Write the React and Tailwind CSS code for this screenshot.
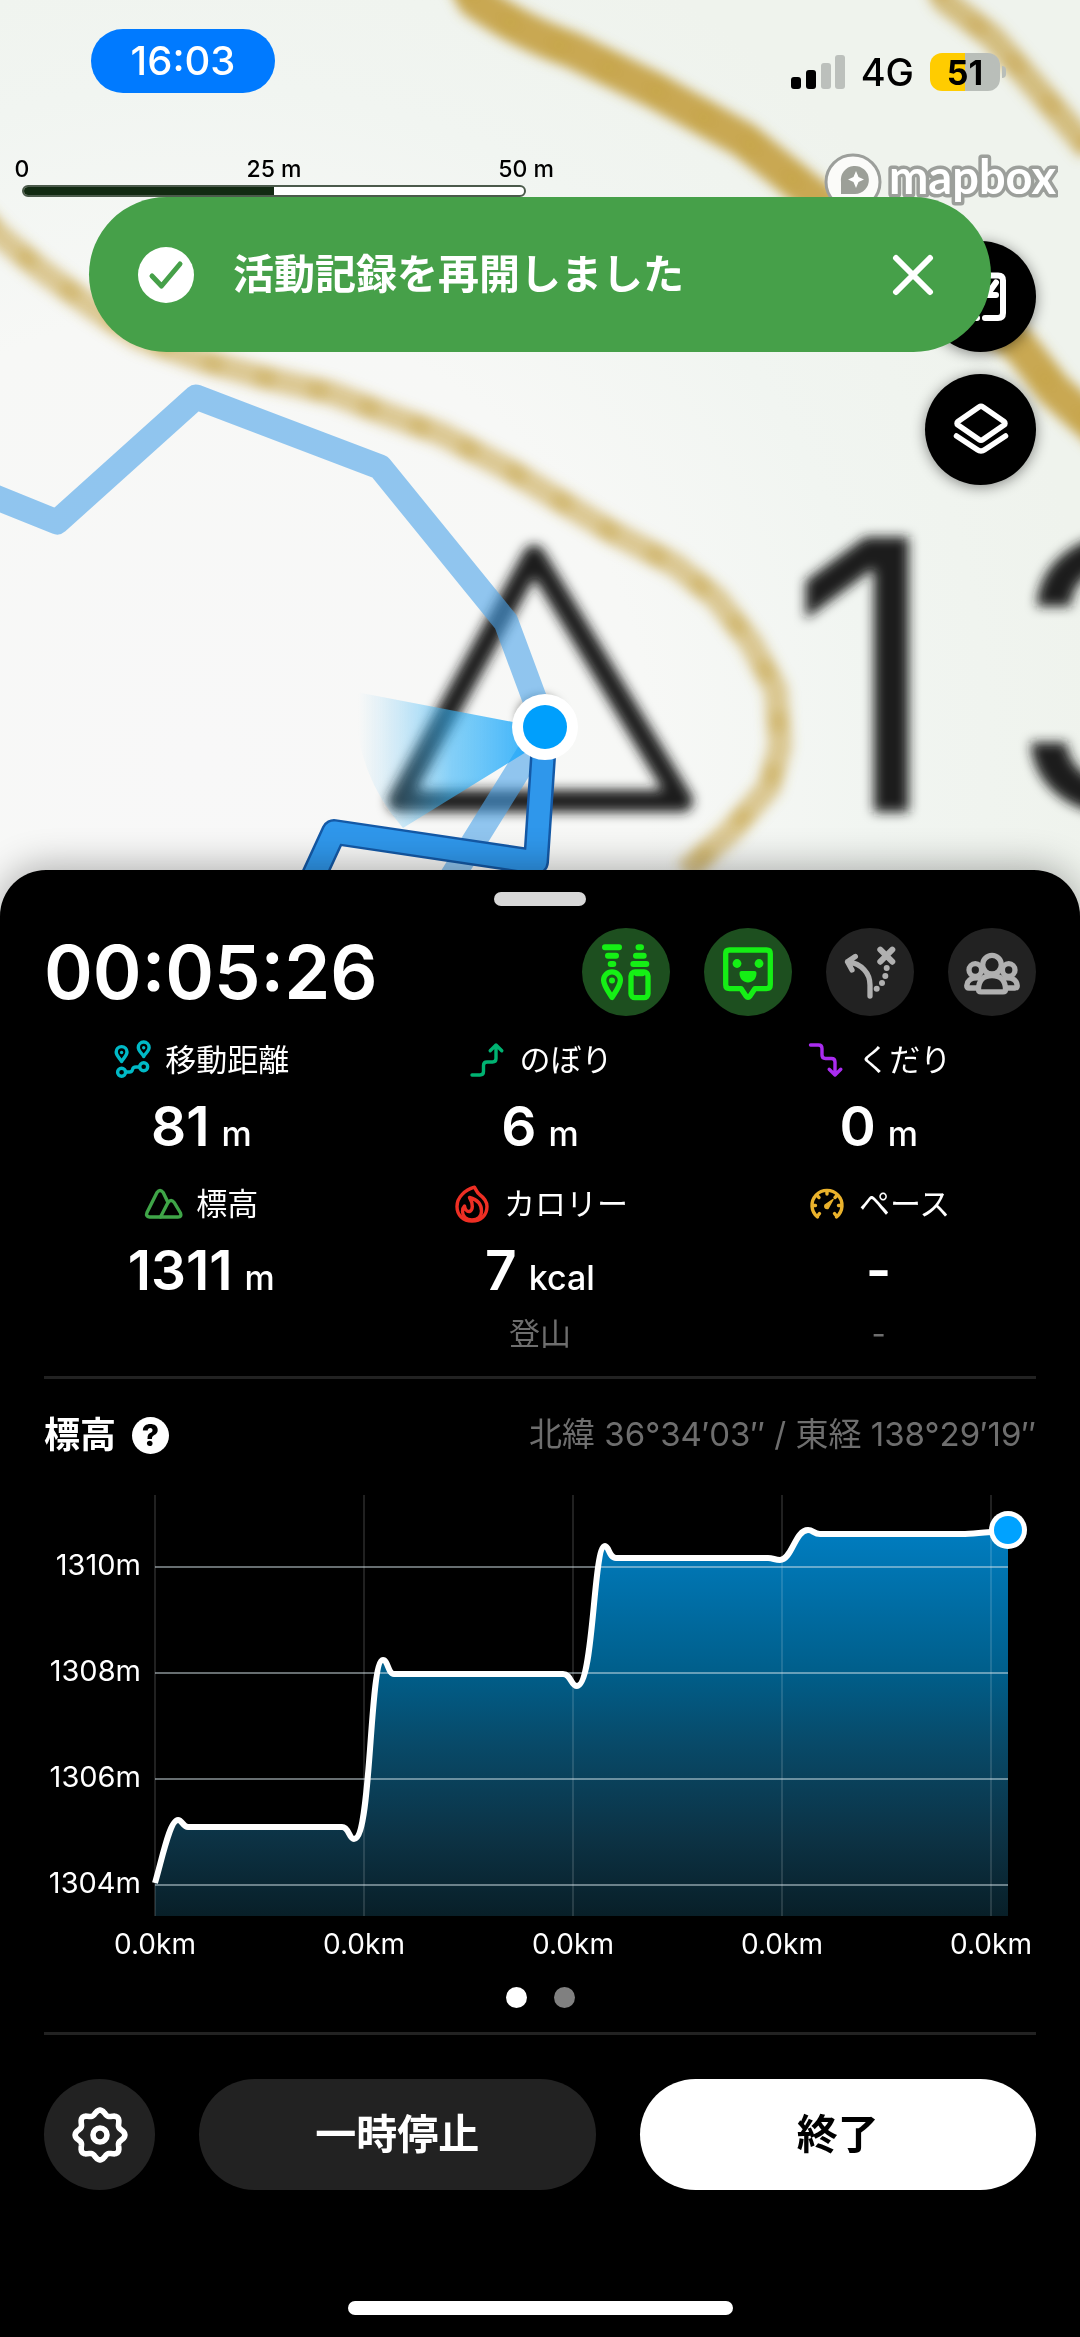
import { useState } from 'react'

const CONTOURS = [
  { d: 'M465 -20 L475 0 Q520 32 572 50 L654 90 L744 140 L806 190 L900 262 L1019 345 L1054 390 L1110 440', w: 36, o: 0.9, bead: 0.25 },
  { d: 'M935 -20 L944 0 L992 37 L1033 84 L1090 150', w: 25, o: 0.65, bead: 0.3 },
  { d: 'M-20 215 L0 236 L41 270 L96 310 L138 337 L200 360 L262 377 L331 393 L386 414 L441 434 L513 472 L544 491 L610 531 L675 565 L716 598 L751 643 L776 690 L780 746 L769 787 L730 832 L685 872', w: 24, o: 0.55, bead: 0.35 }
]

const AREA_LINE =
  'M155 1884 C163 1856 170 1821 178 1821 C182 1821 183 1828 188 1828 H342 C349 1828 349 1840 354 1840 C372 1840 369 1661 383 1661 C388 1661 388 1675 394 1675 H563 C571 1675 571 1687 577 1687 C594 1687 593 1547 605 1547 C609 1547 609 1559 616 1559 H768 C773 1559 775 1561 780 1561 C792 1561 795 1531 808 1531 C813 1531 814 1535 820 1535 H965 C980 1535 990 1532 1008 1532'

const Y_TICKS = [
  { label: '1310m', y: 1568 },
  { label: '1308m', y: 1674 },
  { label: '1306m', y: 1780 },
  { label: '1304m', y: 1886 }
]

const X_TICKS = [155, 364, 573, 782, 991]

const gearPath = Array.from({ length: 96 }, (_, i) => {
  const a = (i / 96) * Math.PI * 2
  const r = 22.6 + 2.3 * Math.cos(8 * a)
  return `${i ? 'L' : 'M'}${(30 + r * Math.cos(a)).toFixed(2)} ${(30 + r * Math.sin(a)).toFixed(2)}`
}).join('') + 'Z'

function StrokeIcon({ box = 40, width = 3.4, className = 'size-10', children }) {
  return (
    <svg
      viewBox={`0 0 ${box} ${box}`}
      className={className}
      fill="none"
      stroke="currentColor"
      strokeWidth={width}
      strokeLinecap="round"
      strokeLinejoin="round"
      aria-hidden="true"
    >
      {children}
    </svg>
  )
}

function MapBackground() {
  return (
    <svg viewBox="0 0 1080 960" className="absolute inset-x-0 top-0 w-full" aria-hidden="true">
      <defs>
        <radialGradient id="ground" gradientUnits="userSpaceOnUse" cx="200" cy="760" r="900">
          <stop offset="0" stopColor="#f8f8f8" />
          <stop offset="0.5" stopColor="#f7f8f6" />
          <stop offset="0.75" stopColor="#f1f5f1" />
          <stop offset="1" stopColor="#eff3ed" />
        </radialGradient>
        <linearGradient id="heading" gradientUnits="userSpaceOnUse" x1="545" y1="0" x2="358" y2="0">
          <stop offset="0" stopColor="#0aa0fb" stopOpacity="0.85" />
          <stop offset="0.5" stopColor="#36b4f8" stopOpacity="0.6" />
          <stop offset="1" stopColor="#7accf8" stopOpacity="0" />
        </linearGradient>
        <filter id="soft" x="-10%" y="-10%" width="120%" height="120%">
          <feGaussianBlur stdDeviation="6" />
        </filter>
      </defs>
      <rect width="1080" height="960" fill="url(#ground)" />
      <g filter="url(#soft)" fill="none" stroke="#c4a040" strokeLinejoin="round">
        {CONTOURS.map((c) => (
          <g key={c.w}>
            <path d={c.d} strokeWidth={c.w} opacity={c.o} />
            <path d={c.d} strokeWidth={c.w - 4} opacity={c.bead} strokeDasharray="20 34" />
          </g>
        ))}
      </g>
      <g filter="url(#soft)" fill="none" stroke="#1a1d1a" strokeWidth="22">
        <path d="M534 556 L399 801 H682 Z" strokeLinejoin="round" />
        <circle cx="540" cy="718" r="9" fill="#1a1d1a" />
      </g>
      <g filter="url(#soft)" fill="#1a1d1a" fontSize="378" className="font-['Inter',sans-serif]">
        <text x="788" y="812">1</text>
        <text x="1008" y="812">3</text>
      </g>
      <path
        d="M-20 491 L57 522 L196 397 L380 467 L506 622 L545 727 L450 880"
        fill="none"
        stroke="#4ba3ea"
        strokeOpacity="0.6"
        strokeWidth="25"
        strokeLinejoin="round"
      />
      <path d="M560 731 L356 692 Q352 770 403 828 Z" fill="url(#heading)" />
      <g fill="none" strokeLinejoin="round">
        <path d="M545 727 L536 862 L334 832 L310 884" stroke="#1459a6" strokeWidth="26" />
        <path d="M545 727 L536 862 L334 832 L310 884" stroke="#2f97eb" strokeWidth="21" />
      </g>
      <circle cx="545" cy="727" r="33" fill="#fff" />
      <circle cx="545" cy="727" r="22" fill="#009ffc" />
    </svg>
  )
}

function StatusBar() {
  return (
    <div className="flex items-start justify-between pt-[29px] pr-[74px] pl-[91px]">
      <span className="flex h-16 w-[184px] items-center justify-center rounded-full bg-[#007aff] text-[40px] font-medium text-white">
        16:03
      </span>
      <div className="mt-[23px] flex items-center text-black">
        <svg viewBox="0 0 54 36" className="h-9 w-[54px]" aria-hidden="true">
          <rect x="0" y="23" width="10" height="12" rx="3" />
          <rect x="15" y="16" width="10" height="19" rx="3" />
          <rect x="30" y="9" width="10" height="26" rx="3" fill="#bcc0bc" />
          <rect x="44" y="1" width="10" height="34" rx="3" fill="#bcc0bc" />
        </svg>
        <span className="ml-4 text-[38px] leading-10 font-medium">4G</span>
        <span className="ml-4 flex h-[38px] w-[70px] items-center justify-center rounded-xl bg-linear-to-r from-[#ffcc00] from-50% to-[#b9beb9] to-50% text-[34px] font-bold">
          51
        </span>
        <span className="ml-[2px] h-3 w-1 rounded-r-full bg-[#b9beb9]" />
      </div>
    </div>
  )
}

function MapLogo() {
  return (
    <svg viewBox="0 0 236 60" className="h-[60px] w-[236px]" role="img" aria-label="mapbox">
      <circle cx="31" cy="31" r="27" fill="#fbfbf9" stroke="#9c9f9b" strokeWidth="3" />
      <path d="M19 43 V31 A14 14 0 1 1 33 43 Z" fill="#9c9f98" />
      <path d="M34 20 L36.500 26 L42 28.500 L36.500 31 L34 37 L31.500 31 L26 28.500 L31.500 26 Z" fill="#fff" />
      <text
        x="67"
        y="43"
        fontSize="47"
        fill="#fff"
        stroke="#9c9f9b"
        strokeWidth="7"
        strokeLinejoin="round"
        paintOrder="stroke"
        className="font-['Lato',sans-serif] font-bold"
      >
        mapbox
      </text>
    </svg>
  )
}

function ScaleBar() {
  return (
    <div className="w-[504px] text-[23px] leading-7 font-medium text-black">
      <div className="flex justify-between">
        <span className="flex w-0 justify-center">0</span>
        <span className="flex w-0 justify-center whitespace-nowrap">25 m</span>
        <span className="flex w-0 justify-center whitespace-nowrap">50 m</span>
      </div>
      <div className="mt-[2px] flex h-3 overflow-hidden rounded-full border-2 border-[#4b5a4b] bg-white">
        <div className="w-1/2 bg-[#122a12]" />
      </div>
    </div>
  )
}

function Toast({ onClose }) {
  return (
    <div
      role="status"
      className="absolute inset-x-[89px] top-[197px] flex h-[155px] items-center rounded-full bg-[#46a049] pr-[52px] pl-[49px] text-white"
    >
      <svg viewBox="0 0 56 56" className="size-14 shrink-0" aria-hidden="true">
        <circle cx="28" cy="28" r="28" fill="#fff" />
        <path d="M14 29 L23.500 39 L42 17" fill="none" stroke="#46a049" strokeWidth="5" strokeLinecap="round" strokeLinejoin="round" />
      </svg>
      <p className="ml-[39px] flex-1 text-[41px] font-semibold">活動記録を再開しました</p>
      <button type="button" aria-label="閉じる" onClick={onClose} className="size-[52px]">
        <StrokeIcon box={52} width={6} className="size-[52px]">
          <path d="M9 9 L43 43 M43 9 L9 43" />
        </StrokeIcon>
      </button>
    </div>
  )
}

function MapButton({ label, children }) {
  return (
    <button
      type="button"
      aria-label={label}
      className="flex size-[111px] items-center justify-center rounded-full bg-black text-white shadow-[0_2px_14px_rgba(0,0,0,0.45)]"
    >
      {children}
    </button>
  )
}

const ACTIONS = [
  {
    label: 'みまもり',
    active: true,
    icon: (
      <>
        <path d="M23 19.300 H37 M26 27.700 H34 M28.700 36 H31.300 M56.500 19.300 H59 M54 27.700 H61.700 M51.300 36 H64.300" strokeWidth="6" />
        <path d="M30 69.500 C28 66 21.600 58 21.600 52.300 A8.400 8.400 0 0 1 38.400 52.300 C38.400 58 32 66 30 69.500 Z" />
        <circle cx="30" cy="52.500" r="3" fill="currentColor" stroke="none" />
        <rect x="49" y="44" width="17" height="25.700" rx="4" />
        <path d="M54.500 45.500 H60.500" />
      </>
    )
  },
  {
    label: 'フィールドメモ',
    active: true,
    icon: (
      <>
        <path d="M25.500 22 H62.500 Q66.300 22 66.300 25.800 V56.800 Q66.300 60.600 62.500 60.600 H51 L46 68 Q44 70.500 42 68 L37 60.600 H25.500 Q21.700 60.600 21.700 56.800 V25.800 Q21.700 22 25.500 22 Z" />
        <circle cx="33" cy="35.500" r="4.400" fill="currentColor" stroke="none" />
        <circle cx="55" cy="35.500" r="4.400" fill="currentColor" stroke="none" />
        <path d="M37.500 43 H50.500 Q52.500 43 52.500 45 C52.500 51 48.500 54.500 44 54.500 S35.500 51 35.500 45 Q35.500 43 37.500 43 Z" fill="currentColor" stroke="none" />
      </>
    )
  },
  {
    label: 'ルート外れ警告',
    active: false,
    icon: (
      <>
        <path d="M44 68 V57 C44 45 36 36 21.500 33.700 M29.300 28.500 L21.500 33.700 L26 42" />
        <path d="M54.300 21.700 L66.300 33.700 M66.300 21.700 L54.300 33.700" strokeWidth="6" />
        <g fill="currentColor" stroke="none">
          <circle cx="60.700" cy="40" r="3" />
          <circle cx="59.300" cy="48" r="3" />
          <circle cx="56" cy="55" r="3" />
          <circle cx="50.700" cy="60.700" r="3" />
        </g>
      </>
    )
  },
  {
    label: 'グループ',
    active: false,
    icon: (
      <>
        <circle cx="44" cy="36.700" r="9.300" />
        <circle cx="27.300" cy="42" r="6.300" />
        <circle cx="60.700" cy="42" r="6.300" />
        <path d="M30.500 61.500 C30.500 53 35 47.500 44 47.500 S57.500 53 57.500 61.500 Q57.500 63.800 55 63.800 H33 Q30.500 63.800 30.500 61.500 Z" />
        <path d="M29 60 H21 Q18.500 60 18.800 57.500 C19.500 52 23 49.500 31 50 M59 60 H67 Q69.500 60 69.200 57.500 C68.500 52 65 49.500 57 50" />
      </>
    )
  }
]

const STATS = [
  {
    label: '移動距離',
    value: '81',
    unit: 'm',
    color: 'text-[#00b9c6]',
    icon: (
      <>
        <path d="M8.600 21.500 C7.500 19 3.200 15.800 3.200 12 A5.400 5.400 0 0 1 14 12 C14 15.800 9.700 19 8.600 21.500 Z" />
        <path d="M30.700 16.500 C29.600 14 25.300 10.800 25.300 7.400 A5.400 5.400 0 0 1 36.100 7.400 C36.100 10.800 31.800 14 30.700 16.500 Z" />
        <circle cx="8.600" cy="12.500" r="1.700" fill="currentColor" stroke="none" />
        <circle cx="30.700" cy="7.700" r="1.700" fill="currentColor" stroke="none" />
        <circle cx="8.600" cy="32.300" r="4" />
        <circle cx="30.700" cy="26.700" r="4" />
        <path d="M13 32 H16.500 Q19 32 19.500 29.500 T23 27 H26.500" />
      </>
    )
  },
  {
    label: 'のぼり',
    value: '6',
    unit: 'm',
    color: 'text-[#00b372]',
    icon: <path d="M5 35 H13 Q16.500 35 16.500 31.500 V25.500 Q16.500 22 20 22 H25.500 Q29 22 29 18.500 V5 M23.200 10.800 L29 5 L34.800 10.800" />
  },
  {
    label: 'くだり',
    value: '0',
    unit: 'm',
    color: 'text-[#aa2cf0]',
    icon: <path d="M4.500 5 H12.500 Q16 5 16 8.500 V15 Q16 18.500 19.500 18.500 H25.500 Q29 18.500 29 22 V35 M23.200 29.200 L29 35 L34.800 29.200" />
  },
  {
    label: '標高',
    value: '1311',
    unit: 'm',
    color: 'text-[#3fa548]',
    icon: (
      <>
        <path d="M16.500 33 H5.500 Q1.500 32.500 3 28.500 L13 8.500 Q16 4.500 19.200 8.500 L24 18.500" />
        <path d="M16.500 33 L24 18.500 Q27 14.500 30.200 18.500 L36.500 29 Q38 33 34 33 Z" />
      </>
    )
  },
  {
    label: 'カロリー',
    value: '7',
    unit: 'kcal',
    note: '登山',
    color: 'text-[#ee2f24]',
    icon: (
      <>
        <path d="M22.500 3.200 C13 6 5 13 5 22.500 C5 31 11 37 20 37 S35 31 35 22.500 C35 16 31 13 27.500 10.500 C24.500 8 24 5.500 22.500 3.200 Z" />
        <path d="M17.500 13.500 C25 15.500 29.500 20.500 29.500 27 C29.500 32 26 36 20 36 C14 36 10.500 32 10.500 27.500 C10.500 25 11.500 23 12.500 22 C13 25.500 15 28 17.500 27.500 C21 26.500 21.500 20 17.500 13.500 Z" />
      </>
    )
  },
  {
    label: 'ペース',
    value: '-',
    note: '-',
    color: 'text-[#eab22c]',
    icon: (
      <>
        <path d="M10.500 33 A15 15 0 1 1 29.500 33" />
        <path d="M10.500 32 L12.500 29.500 M29.500 32 L27.500 29.500 M6 21.500 H8.500 M34 21.500 H31.500 M20 7 V10 M10 11.500 L12 13.500 M30 11.500 L28 13.500" />
        <path d="M26 15.500 L18 21 Q17 25 21 24.500 Z" fill="currentColor" strokeWidth="1.500" />
      </>
    )
  }
]

function Stat({ stat }) {
  return (
    <div className="flex flex-col items-center">
      <dt className="flex h-10 items-center gap-3 text-[31px] whitespace-nowrap">
        <span className={stat.color}>
          <StrokeIcon>{stat.icon}</StrokeIcon>
        </span>
        {stat.label}
      </dt>
      <dd className="mt-[18px] flex h-14 items-baseline gap-3 text-[55px] leading-14 font-semibold">
        {stat.value}
        {stat.unit && <span className="text-[34px] font-medium">{stat.unit}</span>}
      </dd>
      {stat.note && <dd className="mt-4 h-10 text-[31px] leading-10 text-[#6e6e6e]">{stat.note}</dd>}
    </div>
  )
}

function ElevationChart() {
  return (
    <svg viewBox="44 1480 992 484" className="mt-6 w-full overflow-visible text-white" role="img" aria-label="標高グラフ">
      <defs>
        <linearGradient id="area" gradientUnits="userSpaceOnUse" x1="0" y1="1532" x2="0" y2="1917">
          <stop offset="0" stopColor="#007dc0" />
          <stop offset="0.37" stopColor="#005e8a" />
          <stop offset="0.55" stopColor="#084a69" />
          <stop offset="0.8" stopColor="#0c3244" />
          <stop offset="1" stopColor="#081f28" />
        </linearGradient>
      </defs>
      <path d={`${AREA_LINE} V1917 H155 Z`} fill="url(#area)" />
      {X_TICKS.map((x) => (
        <path key={x} d={`M${x} 1496 V1917`} stroke="#fff" strokeOpacity="0.13" strokeWidth="2" />
      ))}
      {Y_TICKS.map((t) => (
        <g key={t.y} strokeWidth="2">
          <path d={`M155 ${t.y} H1008`} stroke="#fff" strokeOpacity="0.2" />
          <path d={`M155 ${t.y} H1008`} stroke="#c8dce6" strokeOpacity="0.35" />
        </g>
      ))}
      <path d={AREA_LINE} fill="none" stroke="#fff" strokeWidth="6" />
      <circle cx="1008" cy="1531" r="19" fill="#fff" />
      <circle cx="1008" cy="1531" r="14" fill="#00a2ff" />
      <g fill="currentColor">
        {Y_TICKS.map((t) => (
          <text key={t.y} x="141" y={t.y + 8} textAnchor="end" fontSize="29">{t.label}</text>
        ))}
        {X_TICKS.map((x) => (
          <text key={x} x={x} y="1955" textAnchor="middle" fontSize="28">0.0km</text>
        ))}
      </g>
    </svg>
  )
}

export default function App() {
  const [toastOpen, setToastOpen] = useState(true)

  return (
    <div className="relative flex min-h-screen flex-col bg-[#f1f5f1] font-['Inter','Noto_Sans_CJK_JP',sans-serif]">
      <MapBackground />

      <div className="relative flex-1 pb-[380px]">
        <StatusBar />
        <div className="mt-[58px] flex items-start justify-between pr-[22px] pl-[22px]">
          <div className="pt-[4px]">
            <ScaleBar />
          </div>
          <MapLogo />
        </div>
        <div className="mt-[30px] mr-11 flex flex-col items-end gap-[22px]">
          <MapButton label="地図">
            <StrokeIcon box={60} width={6} className="size-[60px]">
              <path d="M14 8.500 H47 Q52 8.500 52 13.500 V46 Q52 51 47 51 H34 M26 51 H14 Q8 51 8 46 V13.500 Q8 8.500 14 8.500" />
              <path d="M45 15.500 L36 28 H45" />
            </StrokeIcon>
          </MapButton>
          <MapButton label="レイヤー">
            <StrokeIcon box={60} width={5.500} className="size-[60px]">
              <path d="M28 7 Q30 5.500 32 7 L53 21.500 Q55 23.500 53 25 L32 39.500 Q30 41 28 39.500 L7 25 Q5 23.500 7 21.500 Z" />
              <path d="M5.500 36 L26 49.500 Q30 52.500 34 49.500 L54.500 36" />
            </StrokeIcon>
          </MapButton>
        </div>
        {toastOpen && <Toast onClose={() => setToastOpen(false)} />}
      </div>

      <main className="relative rounded-t-[46px] bg-black px-11 pt-[22px] pb-[22px] text-white shadow-[0_-4px_36px_rgba(0,0,0,0.3)]">
        <div className="mx-auto h-3.5 w-[92px] rounded-full bg-[#d8d8d8]" />

        <div className="mt-[22px] flex items-center justify-between">
          <time className="text-[74px] leading-[88px] font-semibold">00:05:26</time>
          <div className="flex gap-[34px]">
            {ACTIONS.map((a) => (
              <button
                key={a.label}
                type="button"
                aria-label={a.label}
                className={
                  a.active
                    ? 'size-[88px] rounded-full bg-[#1d4f1f] text-[#15ef15]'
                    : 'size-[88px] rounded-full bg-[#222] text-[#b0b0b0]'
                }
              >
                <StrokeIcon box={88} width={5.300} className="size-[88px]">
                  {a.icon}
                </StrokeIcon>
              </button>
            ))}
          </div>
        </div>

        <dl className="mt-6 grid grid-cols-3 gap-x-6 gap-y-[30px]">
          {STATS.map((s) => (
            <Stat key={s.label} stat={s} />
          ))}
        </dl>

        <hr className="mt-[22px] border-t-[3px] border-[#222]" />

        <section>
          <div className="mt-9 flex h-10 items-center justify-between">
            <div className="flex items-center gap-4">
              <h2 className="text-[36px] font-bold">標高</h2>
              <button
                type="button"
                aria-label="標高について"
                className="flex size-[37px] items-center justify-center rounded-full bg-white text-[30px] leading-9 font-extrabold text-black"
              >
                ?
              </button>
            </div>
            <p className="text-[33px] text-[#6e6e6e]">北緯 36°34′03″ / 東経 138°29′19″</p>
          </div>
          <ElevationChart />
        </section>

        <div className="mt-6 flex justify-center gap-[27px]">
          <span className="size-[21px] rounded-full bg-white" />
          <span className="size-[21px] rounded-full bg-[#808080]" />
        </div>

        <hr className="mt-6 border-t-[3px] border-[#222]" />

        <div className="mt-11 flex gap-[44px] text-[41px] font-bold">
          <button type="button" aria-label="設定" className="flex size-[111px] items-center justify-center rounded-full bg-[#222]">
            <StrokeIcon box={60} width={5.600} className="size-[60px]">
              <path d={gearPath} />
              <circle cx="30" cy="30" r="7" />
            </StrokeIcon>
          </button>
          <button type="button" className="h-[111px] flex-1 rounded-full bg-[#222]">一時停止</button>
          <button type="button" className="h-[111px] flex-1 rounded-full bg-white text-black">終了</button>
        </div>

        <div className="mx-auto mt-[111px] h-3.5 w-[385px] rounded-full bg-white" />
      </main>
    </div>
  )
}
